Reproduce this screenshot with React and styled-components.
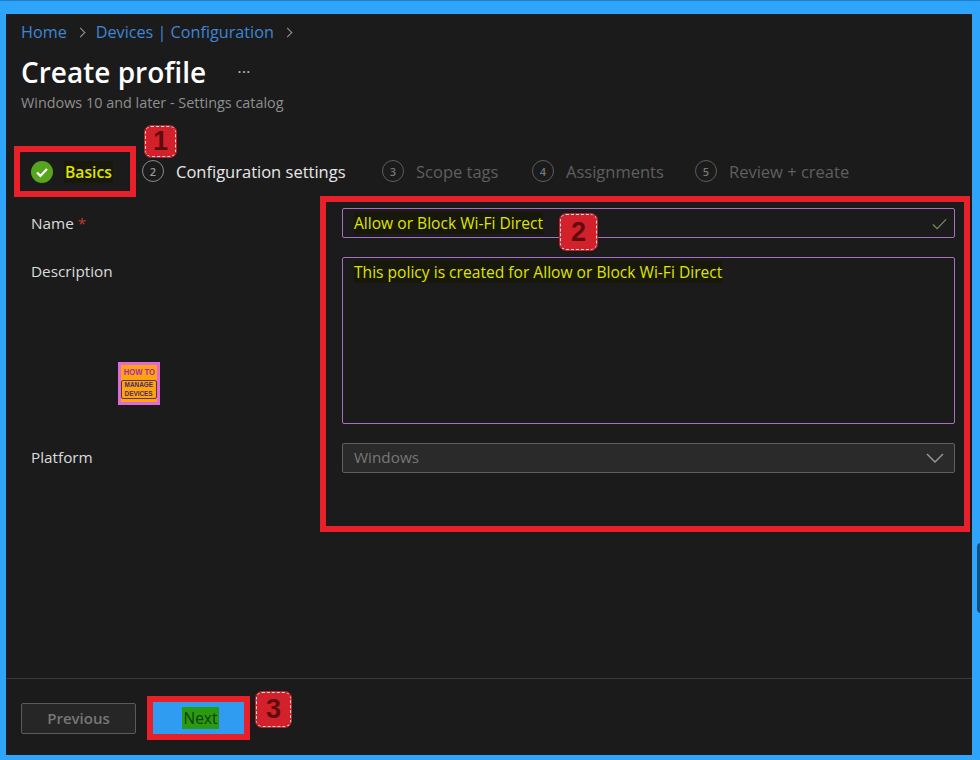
import React from "react";
import styled, { createGlobalStyle } from "styled-components";

const GlobalStyle = createGlobalStyle`
  html, body {
    margin: 0;
    padding: 0;
    background: #2ea4fb;
  }
  * {
    box-sizing: border-box;
  }
`;

const steps = [
  { n: 2, label: "Configuration settings", active: true, width: 240 },
  { n: 3, label: "Scope tags", width: 150 },
  { n: 4, label: "Assignments", width: 163 },
  { n: 5, label: "Review + create", width: 160 },
];

function App() {
  return (
    <Page>
      <GlobalStyle />
      <Panel>
        <Header>
          <Crumbs>
            <a>Home</a>
            <Chevron />
            <a>Devices | Configuration</a>
            <Chevron />
          </Crumbs>
          <TitleRow>
            <h1>Create profile</h1>
            <span>···</span>
          </TitleRow>
          <Subtitle>Windows 10 and later - Settings catalog</Subtitle>
        </Header>

        <Stepper>
          <DoneStep>
            <svg width="22" height="22" viewBox="0 0 22 22">
              <circle cx="11" cy="11" r="11" fill="#57a51d" />
              <path d="M6 11.5l3.4 3.4L16 8" fill="none" stroke="#fff" strokeWidth="2.2" />
            </svg>
            <mark>Basics</mark>
          </DoneStep>
          {steps.map((s) => (
            <Step key={s.n} $active={s.active} $width={s.width}>
              <i>{s.n}</i>
              <span>{s.label}</span>
            </Step>
          ))}
        </Stepper>

        <Form>
          <Label $top={5}>
            <span>
              Name <b>*</b>
            </span>
          </Label>
          <Field $height={30}>
            <mark>Allow or Block Wi-Fi Direct</mark>
            <CheckIcon viewBox="0 0 16 12">
              <path d="M1 6.5l4.5 4.5L15 1" fill="none" stroke="#7d8a55" strokeWidth="1.3" />
            </CheckIcon>
          </Field>
          <Label>
            <span>Description</span>
            <Logo>
              <em>HOW TO</em>
              <strong>
                <span>MANAGE</span>
                <span>DEVICES</span>
              </strong>
            </Logo>
          </Label>
          <Field $height={167} $multi>
            <mark>This policy is created for Allow or Block Wi-Fi Direct</mark>
          </Field>
          <Label>
            <span>Platform</span>
          </Label>
          <Select>
            <span>Windows</span>
            <svg width="18" height="10" viewBox="0 0 18 10">
              <path d="M1 1l8 8 8-8" fill="none" stroke="#9a9a9a" strokeWidth="1.4" />
            </svg>
          </Select>
        </Form>

        <Footer>
          <PrevButton>Previous</PrevButton>
          <NextButton>
            <mark>Next</mark>
          </NextButton>
        </Footer>

        <RedBox $x={8} $y={132} $w={122} $h={51} />
        <RedBox $x={314} $y={182} $w={650} $h={336} />
        <RedBox $x={141} $y={682} $w={103} $h={44} />
        <Badge $x={139} $y={112} $w={31} $h={31}>1</Badge>
        <Badge $x={554} $y={200} $w={37} $h={36}>2</Badge>
        <Badge $x={250} $y={678} $w={35} $h={35}>3</Badge>
      </Panel>
      <EdgeMark />
    </Page>
  );
}

export default App;

const Page = styled.div`
  position: relative;
  width: 980px;
  height: 760px;
  padding: 13px 8px 5px 6px;
  background: #2ea4fb;
  border-top: 1px solid #1f7fc8;
  overflow: hidden;
`;

const EdgeMark = styled.div`
  position: absolute;
  left: 977px;
  top: 542px;
  width: 6px;
  height: 70px;
  background: #14507f;
  border-radius: 4px 0 0 4px;
`;

const Panel = styled.div`
  position: relative;
  height: 741px;
  display: flex;
  flex-direction: column;
  background: #1b1b1b;
  color: #e6e6e6;
  font-family: "Open Sans", "Noto Sans", sans-serif;
  font-size: 15px;

  mark {
    background: #17170a;
    color: #dfe400;
  }
`;

const Header = styled.div`
  padding: 8px 15px 0;
`;

const Crumbs = styled.div`
  display: flex;
  align-items: center;
  gap: 12px;
  height: 20px;
  font-size: 16.2px;
  color: #3f86d6;
`;

const Chevron = styled.span`
  width: 7px;
  height: 7px;
  border-top: 1px solid #9a9a9a;
  border-right: 1px solid #9a9a9a;
  transform: rotate(45deg);
  margin-left: -2px;
`;

const TitleRow = styled.div`
  display: flex;
  align-items: center;
  margin-top: 12px;
  height: 36px;

  h1 {
    margin: 0;
    font-size: 28px;
    font-weight: 600;
    color: #fff;
  }

  span {
    margin-left: 31px;
    color: #b5b5b5;
    font-size: 17px;
    line-height: 20px;
  }
`;

const Subtitle = styled.div`
  margin-top: 3px;
  font-size: 14.4px;
  line-height: 20px;
  color: #8f8f8f;
`;

const Stepper = styled.div`
  display: flex;
  align-items: center;
  height: 30px;
  margin-top: 44px;
  padding-left: 25px;
`;

const DoneStep = styled.div`
  display: flex;
  align-items: center;
  gap: 11px;
  width: 111px;
  font-size: 15.7px;
  font-weight: 600;

  mark {
    padding: 0 1px;
  }
`;

const Step = styled.div`
  display: flex;
  align-items: center;
  gap: 12px;
  width: ${(p) => p.$width}px;
  font-size: 16.5px;
  font-weight: ${(p) => (p.$active ? 500 : 400)};
  color: ${(p) => (p.$active ? "#e8e8e8" : "#5f5f5f")};

  span {
    margin-top: -2px;
  }

  i {
    flex: none;
    width: 22px;
    height: 22px;
    margin-top: -2px;
    border: 1.5px solid ${(p) => (p.$active ? "#8a8a8a" : "#5c5c5c")};
    border-radius: 50%;
    display: flex;
    align-items: center;
    justify-content: center;
    font-style: normal;
    font-size: 11px;
    font-weight: 600;
    color: ${(p) => (p.$active ? "#9a9a9a" : "#777")};
  }
`;

const Form = styled.div`
  display: grid;
  grid-template-columns: 336px 613px;
  row-gap: 19px;
  margin-top: 21px;
  font-size: 15.3px;
`;

const Label = styled.div`
  position: relative;
  padding: ${(p) => p.$top ?? 4}px 0 0 25px;
  color: #dcdcdc;

  b {
    color: #c0392b;
    font-weight: 400;
  }
`;

const Field = styled.div`
  position: relative;
  height: ${(p) => p.$height}px;
  display: flex;
  align-items: ${(p) => (p.$multi ? "flex-start" : "center")};
  padding: ${(p) => (p.$multi ? "3px 11px" : "0 11px")};
  border: 1.5px solid #a56fc2;
  background: #1b1b1b;
  border-radius: 2px;
  font-size: 15.6px;
  font-weight: 500;
`;

const CheckIcon = styled.svg`
  position: absolute;
  right: 7px;
  top: 9px;
  width: 15px;
  height: 12px;
`;

const Logo = styled.div`
  position: absolute;
  left: 112px;
  top: 105px;
  width: 42px;
  height: 43px;
  display: flex;
  flex-direction: column;
  align-items: center;
  padding-top: 3px;
  background: #ffa30f;
  border: 3px solid #e06bd8;
  font-family: "Liberation Sans", sans-serif;
  white-space: nowrap;

  em {
    font-style: normal;
    font-size: 9px;
    line-height: 9px;
    font-weight: 700;
    color: #a12cb0;
    transform: scaleX(0.85);
  }

  strong {
    flex: none;
    display: flex;
    flex-direction: column;
    align-items: center;
    margin-top: 3px;
    width: 36px;
    height: 19px;
    border: 1px solid #5a3a1a;
    border-radius: 2px;
    font-size: 8px;
    line-height: 8.5px;
    font-weight: 700;
    color: #4b2a6a;

    span {
      transform: scaleX(0.8);
    }
  }
`;

const Select = styled.div`
  height: 30px;
  display: flex;
  align-items: center;
  justify-content: space-between;
  padding: 0 10px 2px 11px;
  background: #2a2a2a;
  border: 1px solid #5f5f5f;
  border-radius: 2px;
  color: #777;

  svg {
    margin-top: 2px;
  }
`;

const Footer = styled.div`
  margin-top: auto;
  height: 77px;
  display: flex;
  align-items: flex-start;
  gap: 16px;
  padding: 24px 15px 0;
  border-top: 1px solid #3a3a3a;
`;

const PrevButton = styled.div`
  width: 115px;
  height: 31px;
  padding-bottom: 2px;
  display: flex;
  align-items: center;
  justify-content: center;
  background: #262626;
  border: 1px solid #5a5a5a;
  border-radius: 2px;
  font-size: 15px;
  font-weight: 600;
  color: #777;
`;

const NextButton = styled.div`
  width: 94px;
  height: 33px;
  margin-top: -1px;
  padding: 0 0 2px 3px;
  display: flex;
  align-items: center;
  justify-content: center;
  background: #2f9cf2;
  font-size: 15.5px;
  font-weight: 500;

  mark {
    background: #2a9a10;
    color: #0f3f10;
    padding: 0 1px;
  }
`;

const RedBox = styled.div`
  position: absolute;
  left: ${(p) => p.$x}px;
  top: ${(p) => p.$y}px;
  width: ${(p) => p.$w}px;
  height: ${(p) => p.$h}px;
  border: 6px solid #e8202a;
  pointer-events: none;
`;

const Badge = styled.div`
  position: absolute;
  left: ${(p) => p.$x}px;
  top: ${(p) => p.$y}px;
  width: ${(p) => p.$w}px;
  height: ${(p) => p.$h}px;
  display: flex;
  align-items: center;
  justify-content: center;
  background: #d3212b;
  border: 1.5px dashed #f4d9d9;
  border-radius: 6px;
  outline: 1px solid #c0202a;
  font-family: "Liberation Sans", sans-serif;
  font-size: 27px;
  font-weight: 700;
  color: #5e0c0d;
`;
